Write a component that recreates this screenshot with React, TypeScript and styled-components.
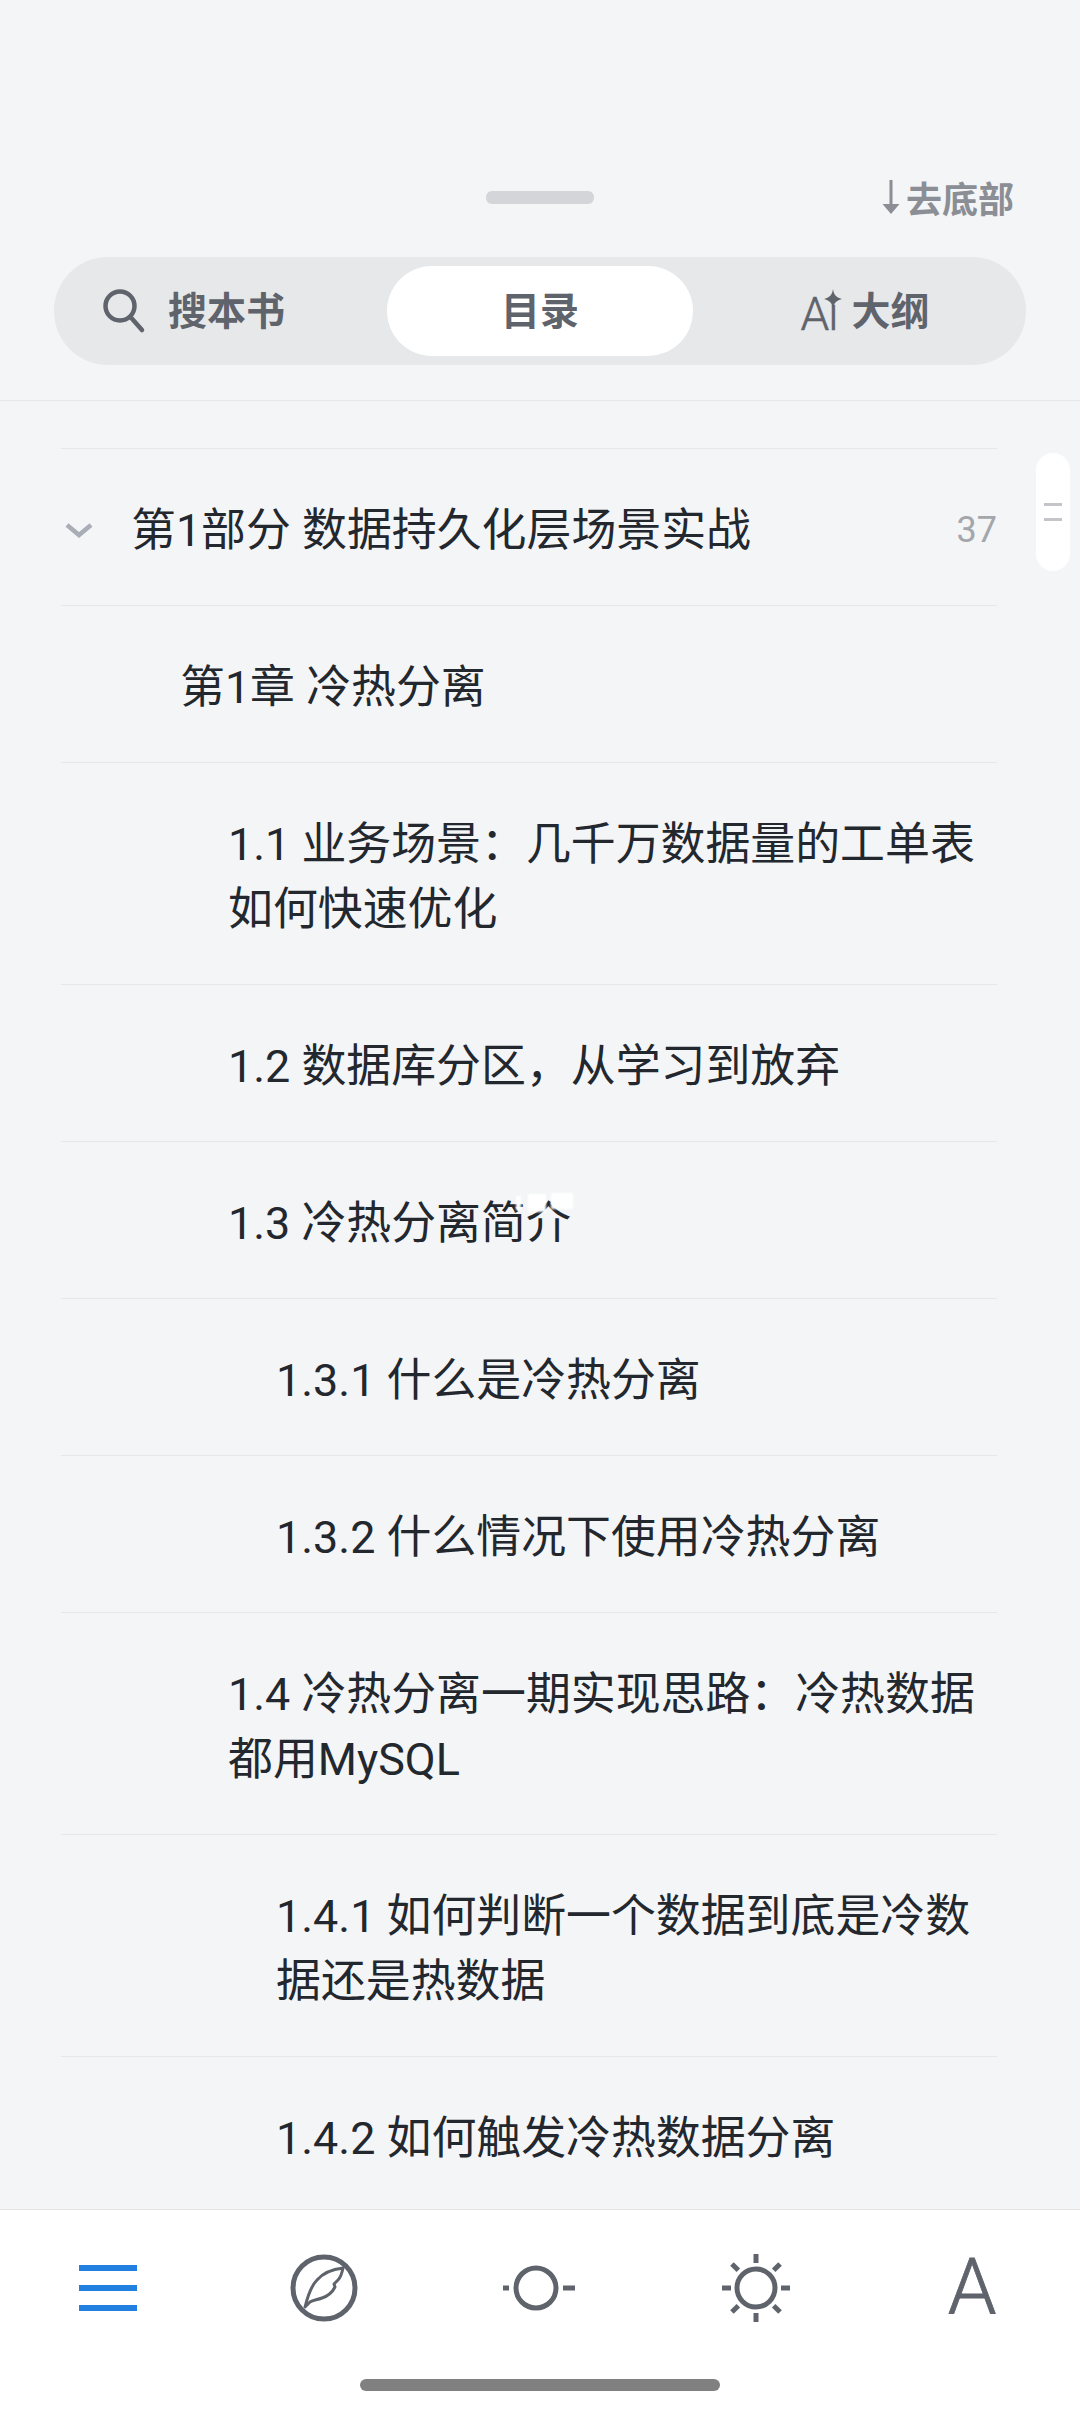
import styled, { createGlobalStyle } from "styled-components";

const GlobalStyle = createGlobalStyle`
  html, body {
    margin: 0;
    padding: 0;
    background: #f4f5f7;
  }

  * {
    box-sizing: border-box;
  }
`;

const fontStack = `Roboto, "Noto Sans CJK SC", sans-serif`;

const Page = styled.div`
  position: relative;
  width: 1080px;
  height: 2412px;
  display: flex;
  flex-direction: column;
  overflow: hidden;
  background: #f4f5f7;
  font-family: ${fontStack};
`;

const Header = styled.header`
  flex: none;
  height: 401px;
  padding: 168px 54px 0;
  border-bottom: 1px solid #e6e7ea;
`;

const TopRow = styled.div`
  display: grid;
  grid-template-columns: 1fr 108px 1fr;
  align-items: center;
  height: 58px;
`;

const Handle = styled.div`
  grid-column: 2;
  height: 13px;
  border-radius: 6px;
  background: #d4d5d8;
`;

const BottomLink = styled.div`
  display: flex;
  justify-content: flex-end;
  align-items: center;
  gap: 6px;
  padding: 0 12px 0 0;
  font-size: 36px;
  font-weight: 700;
  color: #8b8e94;
`;

const Tabs = styled.div`
  display: grid;
  grid-template-columns: 333px 306px 1fr;
  align-items: center;
  height: 108px;
  margin-top: 31px;
  padding: 9px 0;
  border-radius: 54px;
  background: #e7e8ea;
`;

const Tab = styled.div<{ $active?: boolean }>`
  display: flex;
  align-items: center;
  justify-content: center;
  gap: 22px;
  height: 90px;
  padding-bottom: 6px;
  border-radius: 45px;
  font-size: 39px;
  font-weight: 700;
  color: #5f636b;
  background: ${(p) => (p.$active ? "#fff" : "transparent")};
`;

const SearchTab = styled(Tab)`
  justify-content: flex-start;
  padding-left: 48px;

  svg {
    margin-top: 6px;
  }
`;

const OutlineTab = styled(Tab)`
  padding-left: 11px;
`;

const AiMark = styled.span`
  position: relative;
  font-size: 46px;
  font-weight: 300;
  line-height: 1;
  margin-top: 12px;
  margin-right: -8px;
  letter-spacing: -1px;
  -webkit-text-stroke: 0.5px currentColor;

  svg {
    position: absolute;
    right: -4px;
    top: -2px;
  }
`;

const List = styled.main`
  flex: 1;
  min-height: 0;
  overflow: hidden;
  padding: 47px 83px 0 61px;
`;

const Row = styled.div<{ $level: number }>`
  display: flex;
  align-items: flex-start;
  padding: 49px 0 42px ${(p) => 71 + p.$level * 48}px;
  border-top: 1px solid #e6e7ea;
  font-size: 44.9px;
  line-height: 65px;
  color: #23272e;
`;

const PartRow = styled(Row)`
  justify-content: space-between;
  align-items: center;
  padding-left: 4px;
`;

const Chevron = styled.svg`
  flex: none;
  margin-right: 38px;
`;

const PartTitle = styled.span`
  flex: 1;
`;

const Count = styled.span`
  font-size: 36px;
  color: #a3a6ab;
`;

const Title = styled.span`
  position: relative;
`;

const Smudge = styled.svg`
  position: absolute;
  right: -5px;
  top: 2px;
  filter: blur(1px);
`;

const ScrollThumb = styled.div`
  position: absolute;
  left: 1036px;
  top: 453px;
  width: 34px;
  height: 118px;
  display: flex;
  flex-direction: column;
  align-items: center;
  justify-content: center;
  gap: 12px;
  border-radius: 17px;
  background: #fff;

  &::before,
  &::after {
    content: "";
    width: 18px;
    height: 3px;
    background: #c4c5c8;
  }
`;

const Footer = styled.footer`
  flex: none;
  height: 203px;
  display: flex;
  flex-direction: column;
  align-items: center;
  background: #fff;
  border-top: 1px solid #e3e4e6;
`;

const Nav = styled.nav`
  width: 100%;
  height: 155px;
  display: grid;
  grid-template-columns: repeat(5, 1fr);
  align-items: center;
  justify-items: center;
  color: #5f636b;
`;

const FontLetter = styled.span`
  font-size: 78px;
  font-weight: 300;
  line-height: 1;
  color: #5f636b;
  -webkit-text-stroke: 0.8px currentColor;
`;

const HomeBar = styled.div`
  width: 360px;
  height: 12px;
  margin-top: 14px;
  border-radius: 6px;
  background: #808080;
`;

const SearchIcon = () => (
  <svg width="44" height="46" viewBox="0 0 44 46" fill="none" stroke="currentColor" strokeWidth="4.5" strokeLinecap="round">
    <circle cx="18" cy="18" r="14.5" />
    <path d="M28.5 29 40 42" />
  </svg>
);

const MenuIcon = () => (
  <svg width="80" height="80" viewBox="0 0 80 80" fill="#2280e0">
    <rect x="11" y="17" width="58" height="6" />
    <rect x="11" y="37" width="58" height="6" />
    <rect x="11" y="57" width="58" height="6" />
  </svg>
);

const QuillIcon = () => (
  <svg width="70" height="70" viewBox="0 0 70 70" fill="none" stroke="currentColor">
    <circle cx="35" cy="35" r="31" strokeWidth="5" />
    <path
      d="M16 54C19 42 23 32 28 27 35 19 45 16 54 15 53 20 52 24 49 27L45 31 46 34C43 40 39 43 33 45 28 47 24 47 21 49Z"
      strokeWidth="3"
      strokeLinejoin="round"
    />
  </svg>
);

const DimIcon = () => (
  <svg width="80" height="80" viewBox="0 0 80 80" fill="none" stroke="currentColor" strokeWidth="5">
    <circle cx="36" cy="40" r="20" />
    <path d="M3 40h6M63 40h12" />
  </svg>
);

const sunRays = [0, 45, 90, 135, 180, 225, 270, 315];

const SunIcon = () => (
  <svg width="80" height="80" viewBox="0 0 80 80" fill="none" stroke="currentColor" strokeWidth="5">
    <circle cx="40" cy="40" r="19" />
    {sunRays.map((deg) => (
      <path key={deg} d="M40 6v9" transform={`rotate(${deg} 40 40)`} />
    ))}
  </svg>
);

type Item = { level: number; lines: string[]; smudge?: boolean };

const items: Item[] = [
  { level: 1, lines: ["第1章 冷热分离"] },
  { level: 2, lines: ["1.1 业务场景：几千万数据量的工单表", "如何快速优化"] },
  { level: 2, lines: ["1.2 数据库分区，从学习到放弃"] },
  { level: 2, lines: ["1.3 冷热分离简介"], smudge: true },
  { level: 3, lines: ["1.3.1 什么是冷热分离"] },
  { level: 3, lines: ["1.3.2 什么情况下使用冷热分离"] },
  { level: 2, lines: ["1.4 冷热分离一期实现思路：冷热数据", "都用MySQL"] },
  { level: 3, lines: ["1.4.1 如何判断一个数据到底是冷数", "据还是热数据"] },
  { level: 3, lines: ["1.4.2 如何触发冷热数据分离"] },
];

const App = () => {
  return (
    <Page>
      <GlobalStyle />
      <Header>
        <TopRow>
          <Handle />
          <BottomLink>
            <svg width="18" height="34" viewBox="0 0 18 34" fill="#8b8e94">
              <path d="M7.5 0h3v24h7L9 34 .5 24h7z" />
            </svg>
            去底部
          </BottomLink>
        </TopRow>
        <Tabs>
          <SearchTab>
            <SearchIcon />
            搜本书
          </SearchTab>
          <Tab $active>目录</Tab>
          <OutlineTab>
            <AiMark>
              Aı
              <svg width="18" height="20" viewBox="0 0 16 18" fill="#5f636b">
                <path d="M8 0c.8 5 2.500 7.500 8 9-5.500 1.500-7.200 4-8 9-.8-5-2.500-7.500-8-9 5.500-1.500 7.200-4 8-9z" />
              </svg>
            </AiMark>
            大纲
          </OutlineTab>
        </Tabs>
      </Header>

      <List>
        <PartRow $level={0}>
          <Chevron width="28" height="16" viewBox="0 0 28 16" fill="none" stroke="#a9adb5" strokeWidth="4.5">
            <path d="M2 2l12 10L26 2" />
          </Chevron>
          <PartTitle>第1部分 数据持久化层场景实战</PartTitle>
          <Count>37</Count>
        </PartRow>
        {items.map((item) => (
          <Row key={item.lines[0]} $level={item.level}>
            <Title>
              {item.lines[0]}
              {item.lines[1] && <br />}
              {item.lines[1]}
              {item.smudge && (
                <Smudge width="62" height="24" viewBox="0 0 62 24" fill="#fff">
                  <rect x="2" y="3" width="5" height="14" />
                  <rect x="14" y="1" width="18" height="18" />
                  <rect x="37" y="0" width="22" height="16" />
                </Smudge>
              )}
            </Title>
          </Row>
        ))}
      </List>

      <ScrollThumb />

      <Footer>
        <Nav>
          <MenuIcon />
          <QuillIcon />
          <DimIcon />
          <SunIcon />
          <FontLetter>A</FontLetter>
        </Nav>
        <HomeBar />
      </Footer>
    </Page>
  );
};

export default App;
